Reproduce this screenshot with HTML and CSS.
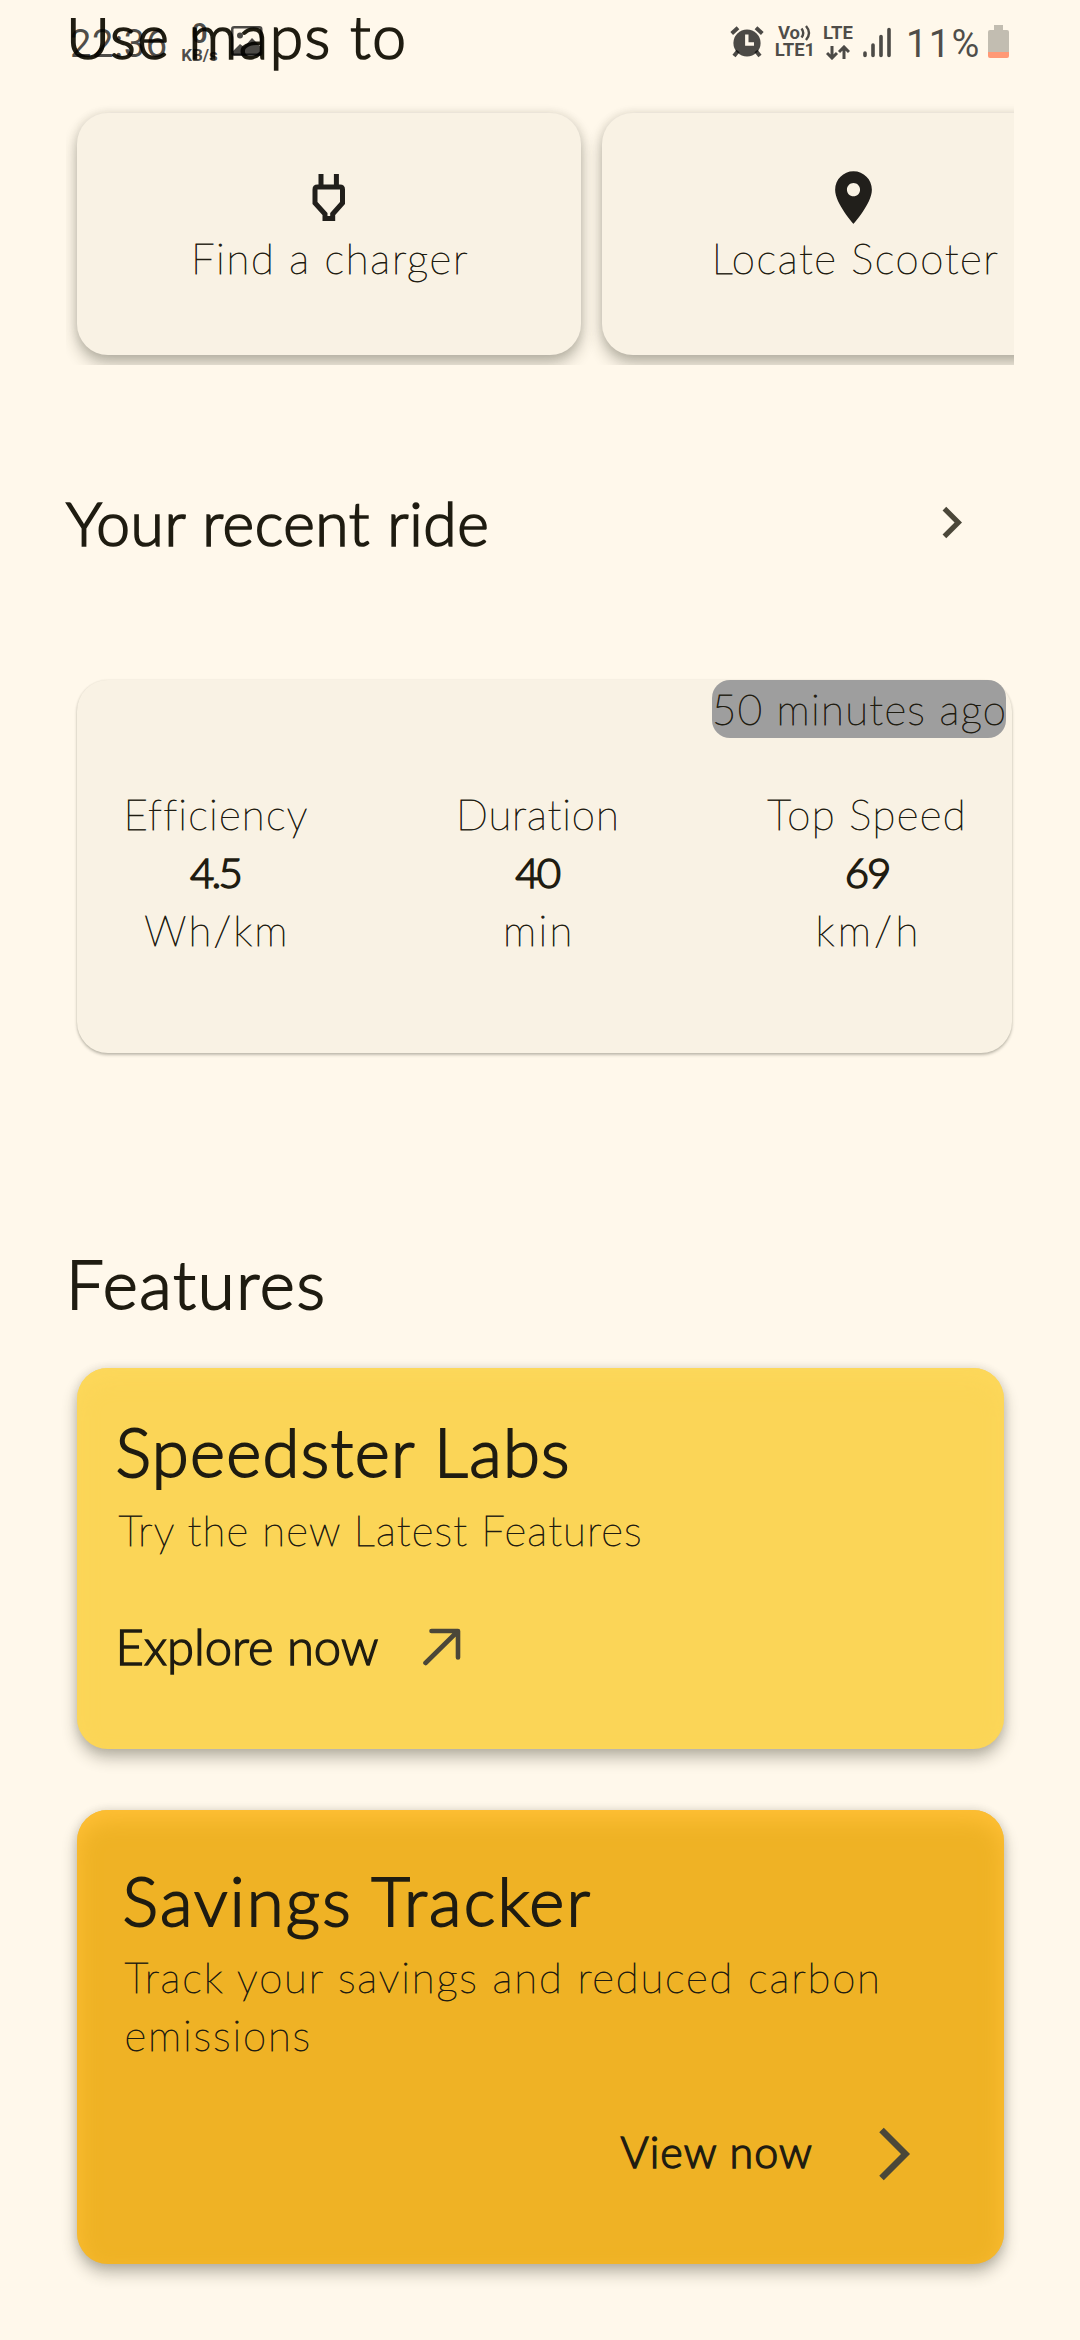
FILE: index.html
```html
<!DOCTYPE html>
<html lang="en">
<head>
<meta charset="utf-8">
<title>Scooter home</title>
<link rel="stylesheet" href="styles.css">
</head>
<body>
<header class="status">
  <span class="clock">22:36</span>
  <span class="speed"><b>0</b><small>KB/s</small></span>
  <svg class="picture" width="32" height="30" viewBox="0 0 32 30"><rect x="1.25" y="1.25" width="29" height="27.5" rx="2" fill="none" stroke="currentColor" stroke-width="2.5"/><circle cx="9" cy="9.5" r="3" fill="currentColor"/><path d="M2 29V25L9 18L13 21L21 12L30 21V29Z" fill="currentColor"/></svg>
  <svg class="alarm" width="34" height="32" viewBox="0 0 34 32"><circle cx="17" cy="17" r="13.6" fill="currentColor"/><path d="M1.700 7.500L8 1.800M32.300 7.500L26 1.800" stroke="currentColor" stroke-width="4" fill="none"/><path d="M8 25L4 30M26 25L30 30" stroke="currentColor" stroke-width="4"/><path d="M16.800 8.500V18H24" fill="none" stroke="#fff8eb" stroke-width="3.400"/></svg>
  <span class="volte"><span class="vo">Vo<svg width="12" height="16" viewBox="0 0 12 16"><path d="M1.500 3.500Q5 8 1.500 12.500M6 1Q12 8 6 15" fill="none" stroke="currentColor" stroke-width="2.400"/></svg></span><span>LTE1</span></span>
  <span class="lte"><span>LTE</span><svg width="24" height="15" viewBox="0 0 24 15"><path d="M6 1V13M1 8L6 13L11 8M18 14V2M13 7L18 2L23 7" fill="none" stroke="currentColor" stroke-width="3"/></svg></span>
  <svg class="signal" width="28" height="31" viewBox="0 0 28 31"><path d="M2 26V28.500M10 18V28.500M18 9.500V28.500M26 2.500V28.500" stroke="currentColor" stroke-width="3.600" stroke-linecap="round"/></svg>
  <span class="level">11%</span>
  <svg class="battery" width="21" height="33" viewBox="0 0 21 33"><path d="M6 0H15V5H19Q21 5 21 7V27H0V7Q0 5 2 5H6Z" fill="#c2bdb1"/><path d="M0 27H21V31Q21 33 19 33H2Q0 33 0 31Z" fill="#ff9976"/></svg>
</header>
<main>
  <h1 class="heading maps">Use maps to</h1>
  <section class="scroller">
    <article class="tile">
      <svg width="63" height="63" viewBox="0 0 63 63"><path d="M20.500 21H43Q45.500 21 45.500 23.500V37L35.700 48V52.500H28V48L18 37V23.500Q18 21 20.500 21ZM24 8V21M39.400 8V21" fill="none" stroke="#211f1b" stroke-width="5"/></svg>
      <span class="text find">Find a charger</span>
    </article>
    <article class="tile">
      <svg width="63" height="63" viewBox="0 0 24 24"><path fill="#211f1b" d="M12 2C8.130 2 5 5.130 5 9c0 5.250 7 13 7 13s7-7.750 7-13c0-3.870-3.130-7-7-7zm0 9.500c-1.380 0-2.500-1.120-2.500-2.500s1.120-2.500 2.500-2.500 2.500 1.120 2.500 2.500-1.120 2.500-2.500 2.500z"/></svg>
      <span class="text locate">Locate Scooter</span>
    </article>
  </section>
  <section class="recent">
    <h2 class="heading recent-title">Your recent ride</h2>
    <svg width="63" height="63" viewBox="0 0 24 24"><path fill="#4b4739" d="M10 6L8.590 7.410 13.170 12l-4.580 4.590L10 18l6-6z"/></svg>
  </section>
  <section class="ride">
    <div class="badge text">50 minutes ago</div>
    <div class="stats">
      <div class="stat"><span class="text efficiency">Efficiency</span><span class="value">4.5</span><span class="text whkm">Wh/km</span></div>
      <div class="stat"><span class="text duration">Duration</span><span class="value">40</span><span class="text min">min</span></div>
      <div class="stat"><span class="text top">Top Speed</span><span class="value nines">69</span><span class="text kmh">km/h</span></div>
    </div>
  </section>
  <h2 class="heading big features">Features</h2>
  <article class="card labs">
    <h3 class="heading big">Speedster Labs</h3>
    <p class="text">Try the new Latest Features</p>
    <div class="action"><span>Explore now</span>
      <svg width="38" height="38" viewBox="0 0 38 38"><path d="M2.500 35L34.500 3.500M8.500 3H35V29.500" fill="none" stroke="#4b4739" stroke-width="4.600" stroke-linecap="round" stroke-linejoin="round"/></svg></div>
  </article>
  <article class="card savings">
    <h3 class="heading big">Savings Tracker</h3>
    <p class="text">Track your savings and reduced carbon emissions</p>
    <div class="action"><span>View now</span>
      <svg width="34" height="56" viewBox="0 0 34 56"><path d="M3.500 4L27.500 28L3.500 52" fill="none" stroke="#4b4739" stroke-width="6.400"/></svg></div>
  </article>
</main>
</body>
</html>
```

FILE: styles.css
```css
* { box-sizing: border-box; margin: 0; }
body {
  position: relative;
  width: 1080px;
  height: 2340px;
  overflow: hidden;
  background: #fff8eb;
  color: #1f1c11;
  font-family: Lato, sans-serif;
}
svg { display: block; flex: none; }

/* status bar floats over the scrolled page */
.status {
  position: absolute;
  inset: 0 0 auto 0;
  z-index: 1;
  display: flex;
  align-items: flex-start;
  padding-left: 70px;
  height: 80px;
  color: rgba(0, 0, 0, .7);
  font-family: Roboto, sans-serif;
}
.clock, .level { font-size: 38px; line-height: 44px; margin-top: 22px; white-space: nowrap; }
.clock { width: 111px; letter-spacing: .6px; }
.speed { display: flex; flex-direction: column; align-items: center; width: 37px; margin-top: 21px; }
.speed b { font-size: 28px; line-height: 26px; font-weight: 700; }
.speed small { font-size: 17px; line-height: 16px; font-weight: 700; }
.picture { margin: 26px 0 0 13px; }
.alarm { margin: 26px 0 0 467px; }
.volte, .lte { display: flex; flex-direction: column; align-items: center; font-size: 18.5px; line-height: 17px; font-weight: 700; }
.volte { width: 40px; margin: 25px 0 0 11px; }
.vo { display: flex; }
.lte { width: 32px; margin: 25px 0 0 7px; }
.lte svg { margin-top: 3px; }
.signal { margin: 27px 0 0 9px; }
.level { width: 80px; margin-left: 15px; letter-spacing: 1.4px; }
.battery { margin: 25px 0 0 2px; }

main { display: flex; flex-direction: column; padding: 0 66px; }

.heading { font-weight: 300; font-size: 60.5px; line-height: 72px; -webkit-text-stroke: 1.7px; white-space: nowrap; }
.big { font-size: 67px; line-height: 80px; -webkit-text-stroke-width: 1.8px; }
.text { font-weight: 100; font-size: 42px; line-height: 58px; letter-spacing: 1.5px; -webkit-text-stroke: .8px; }

.maps { clip-path: inset(18px 0 0 0); letter-spacing: 1.6px; }

.scroller { display: flex; gap: 21px; height: 263px; margin-top: 30px; padding: 10.500px; overflow: hidden; }
.tile {
  flex: none;
  display: flex;
  flex-direction: column;
  align-items: center;
  width: 504px;
  height: 242.500px;
  padding-top: 53px;
  border-radius: 31px;
  background: #f9f2e4;
}
.tile, .card { box-shadow: 0 9px 15px rgba(50, 50, 35, .32), 0 0 10px rgba(50, 50, 35, .13); }
.find { letter-spacing: 1.7px; text-indent: 3px; }
.locate { letter-spacing: 1.6px; text-indent: 4px; }

.recent { display: flex; justify-content: space-between; align-items: flex-start; margin-top: 121px; padding-right: 31.500px; }
.recent svg { margin-top: 5px; }
.recent-title { padding-top: 1px; letter-spacing: .61px; }

.ride {
  display: flex;
  flex-direction: column;
  width: 935.500px;
  height: 373px;
  margin: 121px 0 0 10.500px;
  border-radius: 31px;
  background: #f9f2e4;
  box-shadow: 0 2px 3px rgba(50, 50, 35, .3), 0 0 2px rgba(50, 50, 35, .1);
}
.badge {
  align-self: flex-end;
  width: 294px;
  height: 58px;
  margin-right: 6px;
  border-radius: 18px;
  background: #9e9e9e;
  letter-spacing: 1.3px;
  white-space: nowrap;
}
.stats { display: flex; justify-content: space-between; margin: 47px 45px 0 47px; }
.stat { display: flex; flex-direction: column; align-items: center; }
.value { font-weight: 300; font-size: 42px; line-height: 58px; letter-spacing: -2.8px; text-indent: -2px; -webkit-text-stroke: 1.6px; }
.nines { letter-spacing: -2px; text-indent: 0; }
.efficiency { letter-spacing: 1.2px; }
.whkm { letter-spacing: 2.2px; text-indent: 2px; }
.duration { letter-spacing: .9px; }
.min { letter-spacing: 2.3px; text-indent: 2px; }
.top { letter-spacing: 1.4px; }
.kmh { letter-spacing: 3.4px; text-indent: 3px; }

.features { margin: 190px 0 0 0; letter-spacing: 1.7px; }

.card { width: 927.500px; margin-left: 10.500px; border-radius: 31px; }
.card .text { margin-left: 3px; }
.action { display: flex; font-weight: 300; line-height: 60px; -webkit-text-stroke: 1.4px; }

.labs {
  height: 381px;
  margin-top: 45px;
  padding: 43px 38px 0 39px;
  background: #fbd557;
  box-shadow: 0 9px 15px rgba(50, 50, 35, .32), 0 0 10px rgba(50, 50, 35, .13), inset 0 10px 20px #fdd85b;
}
.labs .big { letter-spacing: 1.3px; }
.labs .text { margin-top: 10px; letter-spacing: 1.15px; }
.labs .action { gap: 45px; margin-top: 57px; font-size: 49px; }
.labs .action svg { margin-top: 12px; }

.savings {
  height: 453.500px;
  margin-top: 61px;
  padding: 50px 92px 0 46px;
  background: #efb225;
  box-shadow: 0 9px 15px rgba(50, 50, 35, .32), 0 0 10px rgba(50, 50, 35, .13), inset 0 10px 22px #ffc036;
}
.savings .big { letter-spacing: 2.15px; }
.savings .text { margin: 8px -20px 0 2px; letter-spacing: 1.84px; }
.savings .action { justify-content: flex-end; gap: 65px; margin-top: 58px; font-size: 43px; letter-spacing: 1.07px; }
.savings .action svg { margin-top: 4px; }
```
